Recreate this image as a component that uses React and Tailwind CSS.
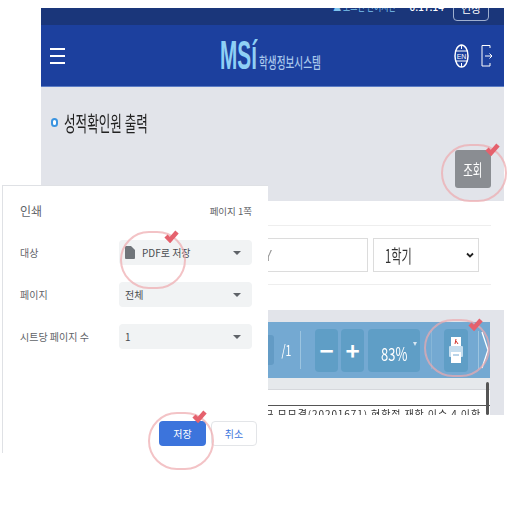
import React from "react";

const KR = { fontFamily: '"Noto Sans CJK KR", "Noto Sans", sans-serif' };

function Ring({ className }) {
  return (
    <div className={`absolute rounded-full border-[2px] border-[#eea9ae]/70 ${className}`} />
  );
}

function Check({ className }) {
  return (
    <svg className={`absolute ${className}`} width="16" height="14" viewBox="0 0 16 14">
      <path d="M3 7 L7 11 L14 3" fill="none" stroke="#e5616d" strokeWidth="4.5" />
    </svg>
  );
}

function Caret() {
  return <div className="h-0 w-0 border-x-[4px] border-t-[4px] border-x-transparent border-t-[#5f6368]" />;
}

function Field({ label, children }) {
  return (
    <div className="flex items-center">
      <div className="w-[99px] text-[10px] text-[#5f6368]">{label}</div>
      <div className="flex h-[25px] w-[133px] items-center justify-between rounded-[4px] bg-[#f1f3f4] pl-[6px] pr-[11px] text-[10px] text-[#4a4d51]">
        {children}
        <Caret />
      </div>
    </div>
  );
}

function ToolBtn({ className, children }) {
  return (
    <div className={`flex h-[43px] items-center justify-center rounded-[4px] bg-[#5f9ec6] text-white ${className}`}>
      {children}
    </div>
  );
}

export default function App() {
  return (
    <div className="relative h-[512px] w-[512px] overflow-hidden bg-white" style={KR}>
      <div className="ml-[41px] w-[463px] pt-[8px] blur-[0.4px]">
        <div className="relative flex h-[17px] items-start justify-end overflow-hidden bg-[#1a367a] pr-[15px]">
          <span className="mt-[-10px] mr-[14px] origin-right scale-x-[0.72] whitespace-nowrap text-[11px] leading-[16px] text-[#7fc4ee]">▲ 로그인 잔여시간</span>
          <span className="mt-[-9px] mr-[9px] text-[10px] font-medium leading-[16px] text-white">0:17:14</span>
          <div className="mt-[-14px] flex h-[27px] w-[36px] items-start justify-center rounded-[4px] border border-[#9fb0d0] pt-[5px] text-[11px] leading-[16px] text-white">
            연장
          </div>
        </div>
        <div className="flex h-[62px] items-center border-b border-[#5b7cc4] bg-[#1c409e] pl-[9px] pr-[11px]">
          <div className="flex w-[15px] flex-col gap-[5px]">
            <div className="h-[2px] bg-white" />
            <div className="h-[2px] bg-white" />
            <div className="h-[2px] bg-white" />
          </div>
          <div className="ml-[155px] mt-[-2px] flex items-end">
            <span className="inline-block w-[36px] origin-left scale-x-[0.52] whitespace-nowrap text-[40px] font-bold leading-[32px] text-[#8fd0f5]" style={{ fontFamily: '"Liberation Sans", sans-serif' }}>
              MSí
            </span>
            <span className="ml-[3px] inline-block w-[63px] origin-left scale-x-[0.64] whitespace-nowrap text-[15px] font-medium leading-[18px] text-[#a9c8ec]">
              학생정보시스템
            </span>
          </div>
          <div className="ml-auto flex items-center gap-[12px]">
            <svg width="15" height="24" viewBox="0 0 15 24">
              <ellipse cx="7.5" cy="12" rx="6.5" ry="11" fill="none" stroke="white" strokeWidth="1.5" />
              <path d="M1 7 H14 M1 17 H14 M7.5 1 V5 M7.5 19 V23" stroke="white" strokeWidth="1" />
              <text x="7.5" y="15" fontSize="7" fill="white" textAnchor="middle" fontFamily="Liberation Sans">EN</text>
            </svg>
            <svg width="12" height="24" viewBox="0 0 12 24" fill="none" stroke="white" strokeWidth="1">
              <path d="M9 4 V1.5 H1 V22 H9 V19" />
              <path d="M4 12 H11 M8.5 9.5 L11 12 L8.5 14.5" />
            </svg>
          </div>
        </div>
        <div className="flex h-[114px] flex-col bg-[#e2e4ea] px-[10px]">
          <div className="mt-[23px] flex items-center">
            <div className="h-[9px] w-[7px] rounded-full border-[2px] border-[#3b94e0] bg-white" />
            <span className="ml-[6px] inline-block w-[78px] origin-left scale-x-[0.6] whitespace-nowrap text-[21px] leading-[24px] text-[#222]">
              성적확인원 출력
            </span>
          </div>
          <div className="mt-[16px] flex justify-end pr-[3px]">
            <div className="flex h-[38px] w-[36px] items-center justify-center rounded-[3px] bg-[#8a8d92] text-[16px] text-white">
              <span className="inline-block scale-x-[0.65]">조회</span>
            </div>
          </div>
        </div>
        <div className="flex h-[109px] w-[450px] flex-col">
          <div className="mt-[24px] border-t border-[#eeeeee]" />
          <div className="mt-[12px] flex justify-end gap-[5px] pr-[12px]">
            <div className="flex h-[34px] w-[130px] items-center justify-end border border-[#dcdcdc] pr-[95px] text-[14px] text-[#999]">Y</div>
            <div className="flex h-[34px] w-[106px] items-center justify-between border border-[#dcdcdc] pl-[11px] pr-[3px] text-[#333]">
              <span className="inline-block origin-left scale-x-[0.62] text-[18px]">1학기</span>
              <svg width="10" height="7" viewBox="0 0 10 7" fill="none" stroke="#222" strokeWidth="1.8"><path d="M2 1.5 L5 4.5 L8 1.5" /></svg>
            </div>
          </div>
          <div className="mt-[12px] border-t border-[#eeeeee]" />
        </div>
        <div className="flex h-[105px] flex-col overflow-hidden bg-[#e2e4ea]">
          <div className="mt-[12px] flex h-[56px] w-[449px] items-center justify-end bg-[#74a9d2] pr-[1px] text-white">
            <div className="mr-[6px] h-[30px] w-[40px] rounded-r-[3px] bg-[#639bc5]" />
            <span className="mr-[10px] inline-block w-[10px] scale-x-[0.7] text-[15px]">/1</span>
            <div className="mr-[14px] h-[38px] w-px bg-[#9cc4e0]" />
            <ToolBtn className="mr-[3px] w-[23px] text-[24px] font-bold">−</ToolBtn>
            <ToolBtn className="mr-[4px] w-[23px] text-[24px] font-bold">+</ToolBtn>
            <ToolBtn className="relative mr-[11px] w-[52px] pt-[7px]">
              <span className="inline-block scale-x-[0.72] text-[18px]">83%</span>
              <span className="absolute right-[3px] top-[13px] h-0 w-0 border-x-[2px] border-t-[4px] border-x-transparent border-t-[#d6e6f2]" />
            </ToolBtn>
            <div className="mr-[12px] h-[38px] w-px bg-[#86b6d8]" />
            <ToolBtn className="mr-[10px] w-[24px]">
              <svg width="14" height="26" viewBox="0 0 14 26">
                <rect x="2" y="0" width="10" height="9" fill="white" />
                <path d="M7 2 L6 7 M7 4 L9 7" stroke="#d2342c" strokeWidth="1" fill="none" />
                <rect x="0" y="9" width="14" height="11" rx="1" fill="#c6deef" />
                <rect x="2" y="15" width="10" height="11" fill="white" />
                <path d="M4 18 H10" stroke="#74a9d2" />
              </svg>
            </ToolBtn>
            <div className="mr-[2px] h-[38px] w-px bg-[#9cc4e0]" />
            <svg width="8" height="38" viewBox="0 0 8 38" fill="none" stroke="white" strokeWidth="1.3">
              <path d="M1 1 L7 19 L1 37" />
            </svg>
          </div>
          <div className="h-[12px] w-[449px] border-b border-[#d6d8dc] bg-[#e6e9ec]" />
          <div className="relative h-[25px] w-[449px] bg-white">
            <div className="absolute left-0 right-0 top-[15px] h-px bg-[#555]" />
            <div className="absolute right-[9px] top-[17px] whitespace-nowrap text-[10px] leading-[14px] tracking-[0.9px] text-[#333]">
              철규 모모결(20201671) 현학점 재학 이수 4 이학
            </div>
            <div className="absolute right-[1px] top-[-8px] h-[33px] w-[3px] rounded-full bg-[#555]" />
          </div>
        </div>
      </div>

      <div className="absolute left-[2px] top-[185px] flex h-[268px] w-[266px] flex-col border-l border-t border-[#dfe1e5] bg-white pl-[17px] pr-[16px]">
        <div className="mt-[16px] flex items-center justify-between">
          <span className="text-[12px] leading-[18px] text-[#5f6368]">인쇄</span>
          <span className="text-[9.5px] text-[#5f6368]">페이지 1쪽</span>
        </div>
        <div className="mt-[20px] flex flex-col gap-[17px]">
          <Field label="대상">
            <div className="flex items-center gap-[7px]">
              <svg width="10" height="13" viewBox="0 0 10 13"><path d="M0 1 Q0 0 1 0 H6 L10 4 V12 Q10 13 9 13 H1 Q0 13 0 12 Z" fill="#70757a" /></svg>
              <span>PDF로 저장</span>
            </div>
          </Field>
          <Field label="페이지"><span>전체</span></Field>
          <Field label="시트당 페이지 수"><span>1</span></Field>
        </div>
        <div className="-mr-[5px] mt-[72px] flex justify-end gap-[5px]">
          <div className="flex h-[25px] w-[47px] items-center justify-center rounded-[4px] bg-[#3c74dc] text-[10px] text-white">저장</div>
          <div className="flex h-[25px] w-[46px] items-center justify-center rounded-[4px] border border-[#e3e5e8] bg-white text-[10px] text-[#3b74dc]">취소</div>
        </div>
      </div>

      <Ring className="left-[441px] top-[144px] h-[58px] w-[66px]" />
      <Check className="left-[484px] top-[142px]" />
      <Ring className="left-[120px] top-[231px] h-[58px] w-[66px]" />
      <Check className="left-[163px] top-[229px]" />
      <Ring className="left-[424px] top-[319px] h-[58px] w-[66px]" />
      <Check className="left-[467px] top-[317px]" />
      <Ring className="left-[148px] top-[412px] h-[58px] w-[66px]" />
      <Check className="left-[191px] top-[409px]" />
    </div>
  );
}
